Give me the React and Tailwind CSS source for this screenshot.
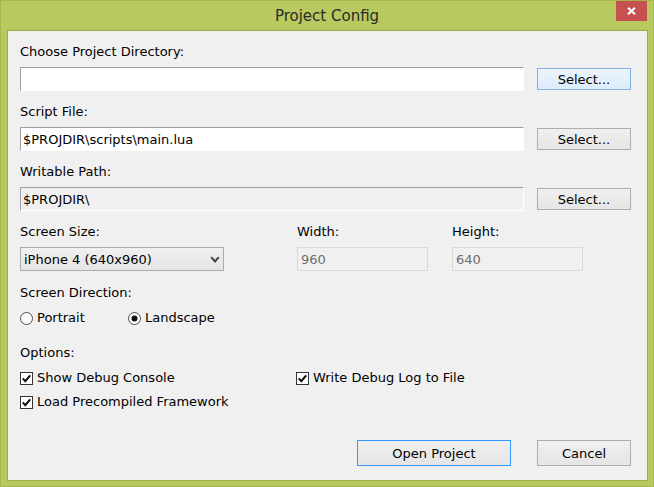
import React from 'react'

const font = "font-['DejaVu_Sans',sans-serif]"

const Label = ({ children, className = '' }) => (
  <div className={`h-4 pt-px text-[13px] leading-4 text-black ${className}`}>{children}</div>
)

const Button = ({ children, className = '', tone = 'normal' }) => {
  const toneClass =
    tone === 'hot'
      ? 'border-[#7eb4ea] bg-gradient-to-b from-[#ecf4fc] to-[#dcecfc]'
      : tone === 'default'
        ? 'border-[#3399ff] bg-gradient-to-b from-[#f0f0f0] to-[#e5e5e5]'
        : 'border-[#adadad] bg-gradient-to-b from-[#f0f0f0] to-[#e5e5e5]'
  return (
    <button
      type="button"
      className={`flex items-center justify-center border pt-px text-[13px] leading-4 text-black ${toneClass} ${className}`}
    >
      {children}
    </button>
  )
}

const PathRow = ({ value = '', disabled = false, hot = false }) => (
  <div className="mt-2 flex h-6 items-center">
    <div
      className={`flex h-6 w-[504px] items-center border-t border-l border-t-[#a0a0a0] border-l-[#a0a0a0] border-r border-b border-r-white border-b-white pl-[2px] pt-px text-[13px] leading-4 text-black ${
        disabled ? 'bg-[#f0f0f0]' : 'bg-white'
      }`}
    >
      {value}
    </div>
    <Button tone={hot ? 'hot' : 'normal'} className="ml-[13px] h-[22px] w-[94px]">
      Select...
    </Button>
  </div>
)

const Radio = ({ checked, label, className = '' }) => (
  <div className={`flex h-4 items-center ${className}`}>
    <svg width="13" height="13" viewBox="0 0 13 13" className="shrink-0">
      <circle cx="6.5" cy="6.5" r="6" fill="#fff" stroke="#4d4d4d" strokeWidth="1" />
      {checked && <circle cx="6.5" cy="6.5" r="3" fill="#111" />}
    </svg>
    <span className="ml-1 text-[13px] leading-4 text-black">{label}</span>
  </div>
)

const Check = ({ label, className = '' }) => (
  <div className={`flex h-4 items-center ${className}`}>
    <svg width="13" height="13" viewBox="0 0 13 13" className="shrink-0">
      <rect x="0.5" y="0.5" width="12" height="12" fill="#fff" stroke="#333" strokeWidth="1" />
      <path d="M2.8 6.4 L5.3 9.1 L10.2 3.4" fill="none" stroke="#111" strokeWidth="2.1" />
    </svg>
    <span className="ml-1 text-[13px] leading-4 text-black">{label}</span>
  </div>
)

const DisabledField = ({ value }) => (
  <div className="flex h-6 w-[131px] items-center border border-[#d9d9d9] bg-[#f0f0f0] pl-[3px] pt-px text-[13px] leading-4 text-[#6d6d6d]">
    {value}
  </div>
)

export default function App() {
  return (
    <div className={`h-[487px] w-[654px] overflow-hidden border border-[#a5b74d] bg-[#b8c95f] ${font}`}>
      {/* title bar */}
      <div className="relative flex h-[29px] items-center justify-center">
        <span className="text-[15px] leading-5 text-[#2b2b2b]">Project Config</span>
        <div className="absolute top-0 right-[6px] flex h-[20px] w-[31px] items-center justify-center bg-[#c75050]">
          <svg width="9" height="8" viewBox="0 0 9 8">
            <path d="M1 0.8 L8 7.2 M8 0.8 L1 7.2" stroke="#fff" strokeWidth="2" />
          </svg>
        </div>
      </div>

      {/* client area */}
      <div className="ml-[6px] h-[451px] w-[641px] border border-[#9aad46] bg-[#f0f0f0] pl-[12px] pt-[12px]">
        <Label>Choose Project Directory:</Label>
        <PathRow hot />

        <Label className="mt-3">Script File:</Label>
        <PathRow value="$PROJDIR\scripts\main.lua" />

        <Label className="mt-3">Writable Path:</Label>
        <PathRow value="$PROJDIR\" disabled />

        <div className="mt-3 flex">
          <Label className="w-[277px]">Screen Size:</Label>
          <Label className="w-[155px]">Width:</Label>
          <Label>Height:</Label>
        </div>
        <div className="mt-2 flex h-6 items-center">
          <div className="flex h-6 w-[204px] items-center justify-between border border-[#acacac] bg-gradient-to-b from-[#f0f0f0] to-[#e5e5e5] pl-[3px] pr-[3px] text-[13px] leading-4 text-black">
            <span className="pt-px">iPhone 4 (640x960)</span>
            <svg width="10" height="7" viewBox="0 0 10 7">
              <path d="M1.2 1.2 L5 5.4 L8.8 1.2" fill="none" stroke="#444" strokeWidth="2" />
            </svg>
          </div>
          <div className="ml-[73px]">
            <DisabledField value="960" />
          </div>
          <div className="ml-[24px]">
            <DisabledField value="640" />
          </div>
        </div>

        <Label className="mt-[13px]">Screen Direction:</Label>
        <div className="mt-[10px] flex">
          <Radio label="Portrait" className="w-[108px]" />
          <Radio label="Landscape" checked />
        </div>

        <Label className="mt-[18px]">Options:</Label>
        <div className="mt-[10px] flex">
          <Check label="Show Debug Console" className="w-[276px]" />
          <Check label="Write Debug Log to File" />
        </div>
        <Check label="Load Precompiled Framework" className="mt-2" />

        <div className="mt-[30px] flex">
          <Button tone="default" className="ml-[337px] h-[26px] w-[154px]">
            Open Project
          </Button>
          <Button className="ml-[26px] h-[26px] w-[94px]">Cancel</Button>
        </div>
      </div>
    </div>
  )
}
